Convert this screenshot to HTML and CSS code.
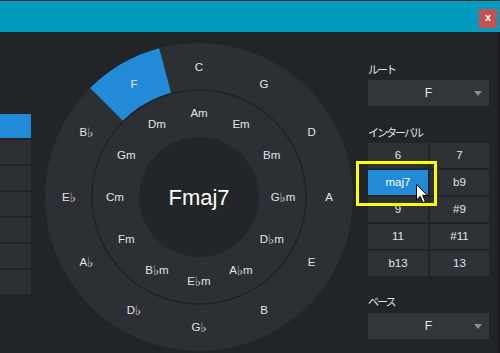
FILE: index.html
```html
<!DOCTYPE html>
<html lang="ja">
<head>
<meta charset="utf-8">
<title>Chord</title>
<link rel="stylesheet" href="styles.css">
</head>
<body>
<div class="app">
  <header class="titlebar">
    <div class="close">x</div>
  </header>
  <div class="main">
    <div class="sidebar">
      <div class="side-btn active"></div>
      <div class="side-btn"></div>
      <div class="side-btn"></div>
      <div class="side-btn"></div>
      <div class="side-btn"></div>
      <div class="side-btn"></div>
      <div class="side-btn"></div>
    </div>
    <svg class="wheel" width="310" height="321" viewBox="0 0 310 321">
      <circle cx="155" cy="165" r="154" fill="#2c3034"/>
      <path d="M46.1 56.1 A154 154 0 0 1 115.14 16.25 L127.31 61.65 A107 107 0 0 0 79.34 89.34 Z" fill="#228ad6"/>
      <circle cx="155" cy="165" r="107" fill="#2c3034" stroke="#1f2225" stroke-width="1.5"/>
      <circle cx="155" cy="165" r="60" fill="#232629"/>
      <g class="lbl">
        <text x="155" y="35">C</text>
        <text x="220" y="52.4">G</text>
        <text x="267.6" y="100">D</text>
        <text x="285" y="165">A</text>
        <text x="267.6" y="230">E</text>
        <text x="220" y="277.6">B</text>
        <text x="155" y="295">G<tspan class="flat">♭</tspan></text>
        <text x="90" y="277.6">D<tspan class="flat">♭</tspan></text>
        <text x="42.4" y="230">A<tspan class="flat">♭</tspan></text>
        <text x="25" y="165">E<tspan class="flat">♭</tspan></text>
        <text x="42.4" y="100">B<tspan class="flat">♭</tspan></text>
        <text x="90" y="52.4">F</text>
        <text x="155" y="81">Am</text>
        <text x="197" y="92.3">Em</text>
        <text x="227.7" y="123">Bm</text>
        <text x="239" y="165">G<tspan class="flat">♭</tspan>m</text>
        <text x="227.7" y="207">D<tspan class="flat">♭</tspan>m</text>
        <text x="197" y="237.7">A<tspan class="flat">♭</tspan>m</text>
        <text x="155" y="249">E<tspan class="flat">♭</tspan>m</text>
        <text x="113" y="237.7">B<tspan class="flat">♭</tspan>m</text>
        <text x="82.3" y="207">Fm</text>
        <text x="71" y="165">Cm</text>
        <text x="82.3" y="123">Gm</text>
        <text x="113" y="92.3">Dm</text>
      </g>
      <text class="chord" x="155" y="165">Fmaj7</text>
    </svg>
    <div class="panel">
      <div class="label first">ルート</div>
      <div class="select">F<span class="arrow"></span></div>
      <div class="label mid">インターバル</div>
      <div class="grid">
        <div class="cell">6</div>
        <div class="cell">7</div>
        <div class="cell active">maj7
          <div class="highlight"></div>
          <svg class="cursor" width="13" height="20" viewBox="0 0 13 20"><path d="M0.5 0.5 L0.5 16 L4.2 12.4 L7 18.6 L9.4 17.5 L6.7 11.4 L11.6 11.4 Z" fill="#ffffff" stroke="#000000" stroke-width="1"/></svg>
        </div>
        <div class="cell">b9</div>
        <div class="cell">9</div>
        <div class="cell">#9</div>
        <div class="cell">11</div>
        <div class="cell">#11</div>
        <div class="cell">b13</div>
        <div class="cell">13</div>
      </div>
      <div class="label last">ベース</div>
      <div class="select">F<span class="arrow"></span></div>
    </div>
    <div class="edge"></div>
  </div>
</div>
</body>
</html>
```

FILE: styles.css
```css
html, body {
  margin: 0;
  padding: 0;
  background: #222528;
}
.app {
  width: 500px;
  height: 353px;
  overflow: hidden;
  font-family: "Liberation Sans", "DejaVu Sans", "Noto Sans CJK JP", sans-serif;
  color: #e2e4e6;
}
.titlebar {
  height: 31px;
  border-top: 1px solid #2b2e31;
  background: #019bbd;
  display: flex;
  justify-content: flex-end;
  align-items: flex-start;
  padding-right: 3px;
}
.close {
  margin-top: 8px;
  width: 18px;
  height: 19px;
  background: #c75150;
  color: #fff;
  font-weight: bold;
  font-size: 11px;
  line-height: 17px;
  text-align: center;
}
.main {
  display: flex;
  height: 321px;
}
.sidebar {
  width: 31px;
  padding-top: 82px;
  display: flex;
  flex-direction: column;
  gap: 2px;
}
.side-btn {
  height: 24px;
  background: #2c3034;
}
.side-btn.active {
  background: #228ad6;
}
.wheel {
  display: block;
  margin-left: 13px;
  flex: none;
}
.lbl text {
  font-family: "Liberation Sans", "DejaVu Sans", sans-serif;
  font-size: 11.5px;
  fill: #e2e4e6;
  text-anchor: middle;
  dominant-baseline: central;
}
.lbl .flat {
  font-family: "DejaVu Sans", sans-serif;
  font-size: 13px;
}
.chord {
  font-family: "Liberation Sans", sans-serif;
  font-size: 22px;
  fill: #ffffff;
  text-anchor: middle;
  dominant-baseline: central;
}
.panel {
  margin-left: 14px;
  width: 121px;
  display: flex;
  flex-direction: column;
}
.label {
  font-family: "Noto Sans CJK JP", sans-serif;
  font-size: 11px;
  letter-spacing: -2px;
  line-height: 14px;
  height: 14px;
  color: #e2e4e6;
}
.label.first { margin-top: 30px; margin-bottom: 4px; }
.label.mid { margin-top: 19px; margin-bottom: 4px; }
.label.last { margin-top: 18px; margin-bottom: 5px; }
.select {
  position: relative;
  height: 26px;
  background: #32363a;
  font-size: 12px;
  line-height: 26px;
  text-align: center;
  color: #e8eaec;
}
.arrow {
  position: absolute;
  right: 7px;
  top: 11px;
  width: 0;
  height: 0;
  border-left: 4px solid transparent;
  border-right: 4px solid transparent;
  border-top: 5px solid #8a8e92;
}
.grid {
  display: grid;
  grid-template-columns: 60px 59px;
  grid-auto-rows: 25px;
  gap: 2px;
}
.cell {
  position: relative;
  background: #2e3236;
  font-size: 11.5px;
  line-height: 25px;
  text-align: center;
  color: #e2e4e6;
}
.cell.active {
  background: #228ad6;
  color: #ffffff;
  z-index: 2;
}
.highlight {
  position: absolute;
  left: -12px;
  top: -9px;
  width: 75px;
  height: 39px;
  border: 3px solid #ffff00;
}
.cursor {
  position: absolute;
  left: 48px;
  top: 14px;
  display: block;
}
.edge {
  margin-left: auto;
  width: 3px;
  background: #1b1d1f;
}
```
